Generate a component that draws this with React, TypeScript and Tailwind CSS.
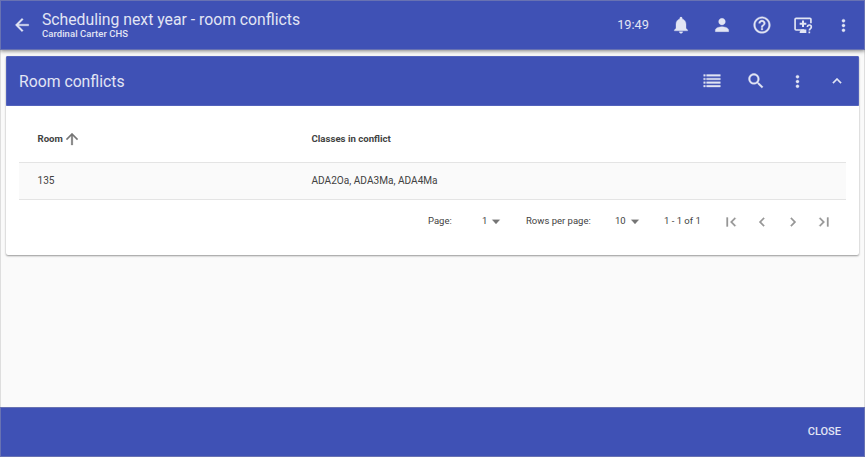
import type { ReactNode } from 'react';

type IconProps = { d: string; className?: string };

function Icon({ d, className = 'size-5' }: IconProps) {
  return (
    <svg viewBox="0 0 24 24" fill="currentColor" className={`shrink-0 ${className}`} aria-hidden="true">
      <path d={d} stroke="currentColor" strokeWidth="0.4" />
    </svg>
  );
}

const icons = {
  back: 'M20 11H7.83l5.59-5.59L12 4l-8 8 8 8 1.41-1.41L7.83 13H20v-2z',
  up: 'M4 12l1.41 1.41L11 7.83V20h2V7.83l5.58 5.59L20 12l-8-8-8 8z',
  bell: 'M12 22c1.1 0 2-.9 2-2h-4c0 1.1.89 2 2 2zm6-6v-5c0-3.07-1.64-5.64-4.5-6.32V4c0-.83-.67-1.5-1.5-1.5s-1.5.67-1.5 1.5v.68C7.63 5.36 6 7.92 6 11v5l-2 2v1h16v-1l-2-2z',
  person: 'M12 12c2.21 0 4-1.79 4-4s-1.79-4-4-4-4 1.79-4 4 1.79 4 4 4zm0 2c-2.67 0-8 1.34-8 4v2h16v-2c0-2.66-5.33-4-8-4z',
  help: 'M11 18h2v-2h-2v2zm1-16C6.48 2 2 6.48 2 12s4.48 10 10 10 10-4.48 10-10S17.52 2 12 2zm0 18c-4.41 0-8-3.59-8-8s3.59-8 8-8 8 3.59 8 8-3.59 8-8 8zm0-14c-2.21 0-4 1.79-4 4h2c0-1.1.9-2 2-2s2 .9 2 2c0 2-3 1.75-3 5h2c0-2.25 3-2.5 3-5 0-2.21-1.79-4-4-4z',
  more: 'M12 8c1.1 0 2-.9 2-2s-.9-2-2-2-2 .9-2 2 .9 2 2 2zm0 2c-1.1 0-2 .9-2 2s.9 2 2 2 2-.9 2-2-.9-2-2-2zm0 6c-1.1 0-2 .9-2 2s.9 2 2 2 2-.9 2-2-.9-2-2-2z',
  search: 'M15.5 14h-.79l-.28-.27C15.41 12.59 16 11.11 16 9.5 16 5.91 13.09 3 9.5 3S3 5.91 3 9.5 5.91 16 9.5 16c1.61 0 3.09-.59 4.23-1.57l.27.28v.79l5 4.99L20.49 19l-4.99-5zm-6 0C7.01 14 5 11.99 5 9.5S7.01 5 9.5 5 14 7.01 14 9.5 11.99 14 9.5 14z',
  collapse: 'M12 8l-6 6 1.41 1.41L12 10.83l4.59 4.58L18 14z',
  first: 'M18.41 16.59L13.82 12l4.59-4.59L17 6l-6 6 6 6zM6 6h2v12H6z',
  prev: 'M15.41 7.41L14 6l-6 6 6 6 1.41-1.41L10.83 12z',
  next: 'M10 6L8.59 7.41 13.17 12l-4.58 4.59L10 18l6-6z',
  last: 'M5.59 7.41L10.18 12l-4.59 4.59L7 18l6-6-6-6zM16 6h2v12h-2z',
  drop: 'M7 9l5 5.500 5-5.500z',
  list: 'M2 4.300h2v2H2zM5.500 4.300h16.500v2H5.500zM2 8.600h2v2H2zM5.500 8.600h16.500v2H5.500zM2 12.900h2v2H2zM5.500 12.900h16.500v2H5.500zM2 17.200h2v2H2zM5.500 17.200h16.500v2H5.500z',
};

function ScreenHelpIcon() {
  return (
    <svg viewBox="0 0 24 24" className="size-5 shrink-0" fill="none" stroke="currentColor" strokeWidth="2" aria-hidden="true">
      <path d="M13.500 18H3.700Q2.500 18 2.500 16.800V5.200Q2.500 4 3.700 4H20.300Q21.500 4 21.500 5.200V10" />
      <path d="M12 6.500v8M8 10.500h8" strokeWidth="2.400" />
      <path d="M8 21.500v-1.500l2-2.500H16v4z" fill="currentColor" stroke="none" />
      <path d="M17.300 14.500c0-1.500 1-2.500 2.300-2.500s2.400 1 2.400 2.300c0 2-2.400 2-2.400 4.200M19.600 19.800v2" />
    </svg>
  );
}

function Slot({ className, children }: { className: string; children: ReactNode }) {
  return <div className={`flex shrink-0 items-center justify-center ${className}`}>{children}</div>;
}

export default function App() {
  return (
    <div className="flex h-[457px] w-[865px] flex-col overflow-hidden bg-[#fafafa] font-['Roboto',sans-serif] text-[#424242]">
      <header className="z-10 flex h-[50px] shrink-0 items-center border border-[#6872b2] bg-[#3f51b5] pr-[10px] pl-[11px] text-[#e2e5f4] shadow-[0_1px_4px_rgba(0,0,0,0.5)]">
        <Icon d={icons.back} />
        <div className="ml-[10px] flex-1">
          <h1 className="text-[15.750px] leading-[18px] whitespace-nowrap">Scheduling next year - room conflicts</h1>
          <p className="text-[9.500px] leading-[10px] font-medium tracking-[0.050px]">Cardinal Carter CHS</p>
        </div>
        <div className="mr-[12px] text-[12.800px]">19:49</div>
        <Slot className="w-10"><Icon d={icons.bell} /></Slot>
        <Slot className="w-[41px]"><Icon d={icons.person} /></Slot>
        <Slot className="w-10"><Icon d={icons.help} /></Slot>
        <Slot className="w-[41px]"><ScreenHelpIcon /></Slot>
        <Slot className="-mr-[9px] w-10"><Icon d={icons.more} className="size-[19px]" /></Slot>
      </header>

      <main className="flex-1 border-x border-[#dedede] px-[5px] pt-[6px]">
        <section className="h-[199px] rounded-[2px] bg-white shadow-[0_1px_2px_rgba(0,0,0,0.4)]">
          <div className="flex h-[50px] items-center rounded-t-[1px] border border-[#5363bc] bg-[#3f51b5] pl-[12px] text-[#e2e5f4]">
            <h2 className="flex-1 pt-px text-[15.750px]">Room conflicts</h2>
            <Slot className="w-11"><Icon d={icons.list} /></Slot>
            <Slot className="w-11"><Icon d={icons.search} /></Slot>
            <Slot className="w-[38px]"><Icon d={icons.more} className="size-[19px]" /></Slot>
            <Slot className="w-[42px]"><Icon d={icons.collapse} className="size-[18px]" /></Slot>
          </div>

          <div className="px-[13px] text-[10px]">
            <div className="flex h-[57px] items-center border-b border-[#e4e4e4] pt-[10px] pl-[18.500px] text-[9.650px] font-bold">
              <div className="flex w-[274px] items-center">
                Room
                <Icon d={icons.up} className="size-[18px] text-[#757575]" />
              </div>
              <div>Classes in conflict</div>
            </div>
            <div className="flex h-[37px] items-center border-b border-[#e4e4e4] bg-[#fafafa] pl-[18.500px] text-[10.100px]">
              <div className="w-[274px]">135</div>
              <div>ADA2Oa, ADA3Ma, ADA4Ma</div>
            </div>
            <div className="flex h-[43px] items-center pl-[409px] text-[9.500px] whitespace-nowrap">
              <div className="w-[54px]">Page:</div>
              <div className="flex w-[44px] items-center">1<Icon d={icons.drop} className="size-[18px] text-[#757575]" /></div>
              <div className="w-[89px]">Rows per page:</div>
              <div className="flex w-[49px] items-center">10<Icon d={icons.drop} className="size-[18px] text-[#757575]" /></div>
              <div className="w-[51px]">1 - 1 of 1</div>
              <div className="flex text-[#969696]">
                <Slot className="w-[31px]"><Icon d={icons.first} className="size-[18px]" /></Slot>
                <Slot className="w-[31px]"><Icon d={icons.prev} className="size-[18px]" /></Slot>
                <Slot className="w-[31px]"><Icon d={icons.next} className="size-[18px]" /></Slot>
                <Slot className="w-[31px]"><Icon d={icons.last} className="size-[18px]" /></Slot>
              </div>
            </div>
          </div>
        </section>
      </main>

      <footer className="flex h-[50px] shrink-0 items-center justify-end border border-[#6872b2] bg-[#3f51b5] pr-[23px] text-[#e2e5f4]">
        <button className="text-[11px] font-medium">CLOSE</button>
      </footer>
    </div>
  );
}
